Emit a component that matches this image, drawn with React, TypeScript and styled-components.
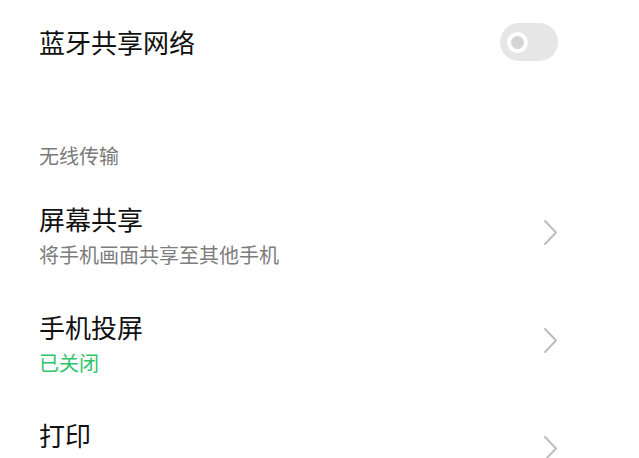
import styled, { createGlobalStyle } from 'styled-components';

const GlobalStyle = createGlobalStyle`
  html, body {
    margin: 0;
    padding: 0;
    background: #ffffff;
  }
  body {
    font-family: "Noto Sans CJK SC", "Noto Sans", sans-serif;
    color: #111111;
  }
`;

const Page = styled.div`
  width: 639px;
  height: 458px;
  overflow: hidden;
  padding: 0 81px 0 39px;
  box-sizing: border-box;
  background: #ffffff;
`;

const SwitchRow = styled.div`
  display: flex;
  align-items: center;
  justify-content: space-between;
  height: 84px;
`;

const Title = styled.div`
  font-size: 26px;
  line-height: 34px;
  color: #111111;
`;

const Toggle = styled.div`
  width: 58px;
  height: 38px;
  border-radius: 19px;
  background: #e6e6e6;
  display: flex;
  align-items: center;
  padding-left: 7px;
  box-sizing: border-box;
`;

const Knob = styled.div`
  width: 13px;
  height: 13px;
  border-radius: 50%;
  background: #d4d4d4;
  border: 4.5px solid #ffffff;
`;

const SectionHeader = styled.div`
  margin-top: 58px;
  font-size: 20px;
  line-height: 28px;
  color: #7a7a7a;
  padding-bottom: 11px;
`;

const ItemRow = styled.div`
  display: flex;
  align-items: center;
  justify-content: space-between;
  padding: 20px 0;
  min-height: 68px;
`;

const ItemText = styled.div`
  display: flex;
  flex-direction: column;
  gap: 5px;
`;

const Sub = styled.div<{ $green?: boolean }>`
  font-size: 20px;
  line-height: 28px;
  color: ${(p) => (p.$green ? '#2fc46c' : '#7d7d7d')};
`;

const Chevron = () => (
  <svg width="15" height="27" viewBox="0 0 15 27" style={{ marginTop: -6 }}>
    <polyline
      points="2,2 13,13.5 2,25"
      fill="none"
      stroke="#bdbdbd"
      strokeWidth="2"
      strokeLinecap="round"
      strokeLinejoin="round"
    />
  </svg>
);

const items = [
  { title: '屏幕共享', sub: '将手机画面共享至其他手机' },
  { title: '手机投屏', sub: '已关闭', green: true },
  { title: '打印', sub: '' },
];

export default function App() {
  return (
    <Page>
      <GlobalStyle />
      <SwitchRow>
        <Title>蓝牙共享网络</Title>
        <Toggle>
          <Knob />
        </Toggle>
      </SwitchRow>
      <SectionHeader>无线传输</SectionHeader>
      {items.map((it) => (
        <ItemRow key={it.title}>
          <ItemText>
            <Title>{it.title}</Title>
            <Sub $green={it.green}>{it.sub || '\u00a0'}</Sub>
          </ItemText>
          <Chevron />
        </ItemRow>
      ))}
    </Page>
  );
}
